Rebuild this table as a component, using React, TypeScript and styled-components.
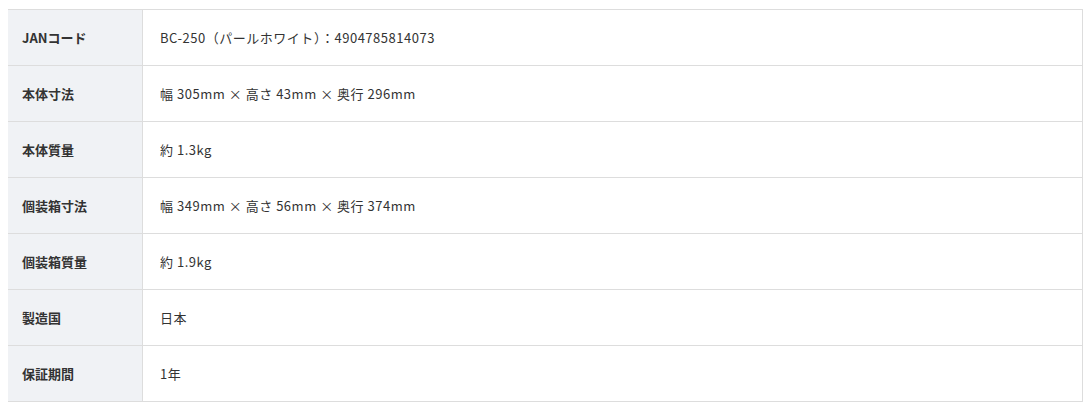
import styled, { createGlobalStyle } from "styled-components";

const GlobalStyle = createGlobalStyle`
  body {
    margin: 9px 9px 8px 8px;
    background: #fff;
    font-family: "Noto Sans CJK JP", "Noto Sans", sans-serif;
    color: #333;
  }
`;

const SpecTable = styled.table`
  width: 100%;
  border-collapse: collapse;
  border-top: 1px solid #ddd;
  border-right: 1px solid #ddd;
  font-size: 13px;
`;

const Row = styled.tr`
  border-bottom: 1px solid #ddd;
  height: 56px;
`;

const Head = styled.th`
  width: 106px;
  padding: 0 14px;
  text-align: left;
  font-weight: 700;
  background: #f0f2f5;
  border-right: 1px solid #ddd;
  color: #333;
`;

const Value = styled.td`
  padding: 0 17px;
  letter-spacing: 0.04em;
  color: #333;
`;

interface ISpec {
  label: string;
  value: string;
}

const specs: ISpec[] = [
  { label: "JANコード", value: "BC-250（パールホワイト）：4904785814073" },
  { label: "本体寸法", value: "幅 305mm × 高さ 43mm × 奥行 296mm" },
  { label: "本体質量", value: "約 1.3kg" },
  { label: "個装箱寸法", value: "幅 349mm × 高さ 56mm × 奥行 374mm" },
  { label: "個装箱質量", value: "約 1.9kg" },
  { label: "製造国", value: "日本" },
  { label: "保証期間", value: "1年" },
];

function App() {
  return (
    <>
      <GlobalStyle />
      <SpecTable>
        <tbody>
          {specs.map((spec) => (
            <Row key={spec.label}>
              <Head>{spec.label}</Head>
              <Value>{spec.value}</Value>
            </Row>
          ))}
        </tbody>
      </SpecTable>
    </>
  );
}
export default App;
